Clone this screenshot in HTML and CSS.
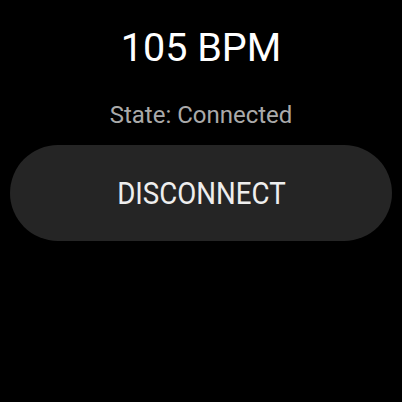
FILE: index.html
```html
<!DOCTYPE html>
<html lang="en">
  <head>
    <meta charset="UTF-8" />
    <meta name="viewport" content="width=device-width, initial-scale=1.0" />
    <title>Heart Rate</title>
    <link rel="stylesheet" href="styles.css">
  </head>
  <body>
    <div class="screen">
      <h1 class="bpm">105 BPM</h1>
      <p class="state">State: Connected</p>
      <button class="disconnect-button"><span>DISCONNECT</span></button>
    </div>
  </body>
</html>
```

FILE: styles.css
```css
body {
  margin: 0;
  background: #000000;
  color: #ffffff;
  font-family: "Roboto", "Liberation Sans", sans-serif;
}

.screen {
  display: flex;
  flex-direction: column;
  align-items: center;
  padding: 26px 10px 0;
}

.bpm {
  margin: 0;
  font-size: 39.5px;
  font-weight: 400;
  line-height: 44px;
}

.state {
  margin: 31px 0 0;
  font-size: 24px;
  line-height: 28px;
  color: #aaaaaa;
}

.disconnect-button {
  margin-top: 16px;
  width: 100%;
  height: 96px;
  border: none;
  border-radius: 48px;
  background-color: #252525;
  color: #eeeeee;
  font-family: "Roboto", "Liberation Sans", sans-serif;
  font-size: 32px;
  cursor: pointer;
}

.disconnect-button span {
  display: inline-block;
  transform: scaleX(0.865);
}
```
